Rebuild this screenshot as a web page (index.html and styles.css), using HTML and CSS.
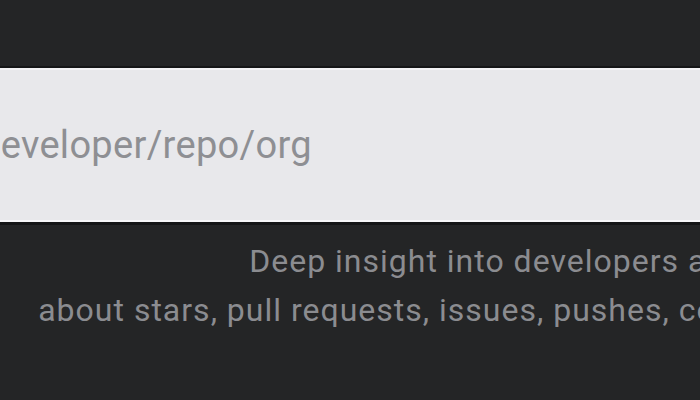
FILE: index.html
```html
<!DOCTYPE html>
<html lang="en">
<head>
<meta charset="utf-8">
<title>Search</title>
<link rel="stylesheet" href="styles.css">
</head>
<body>
<main class="hero">
  <div class="search-box">
    <input class="search-input" type="text" placeholder="developer/repo/org">
  </div>
  <p class="subtitle">Deep insight into developers and repos on GitHub,<br>about stars, pull requests, issues, pushes, comments, reviews, forks and more</p>
</main>
</body>
</html>
```

FILE: styles.css
```css
html, body {
  margin: 0;
  padding: 0;
  background: #242526;
  overflow: hidden;
}
body {
  width: 700px;
  height: 400px;
  font-family: Roboto, "Noto Sans", sans-serif;
}
.hero {
  width: 1375px;
  margin-left: -60px;
  padding-top: 66px;
  display: flex;
  flex-direction: column;
}
.search-box {
  border-top: 2px solid #151617;
  border-bottom: 3px solid #151617;
}
.search-input {
  display: block;
  box-sizing: border-box;
  width: 100%;
  height: 154px;
  margin: 0;
  padding: 0 0 0 39px;
  border: none;
  border-top: 2px solid #f2f2f4;
  border-bottom: 2px solid #f7f7f9;
  background: #e8e8eb;
  font-family: Roboto, sans-serif;
  font-size: 38px;
  letter-spacing: 0.3px;
  color: #333;
  outline: none;
}
.search-input::placeholder {
  color: #8e8f93;
  opacity: 1;
}
.subtitle {
  margin: 12px 0 0;
  text-align: center;
  font-size: 32px;
  letter-spacing: 1px;
  line-height: 49px;
  color: #8b8c90;
}
```
